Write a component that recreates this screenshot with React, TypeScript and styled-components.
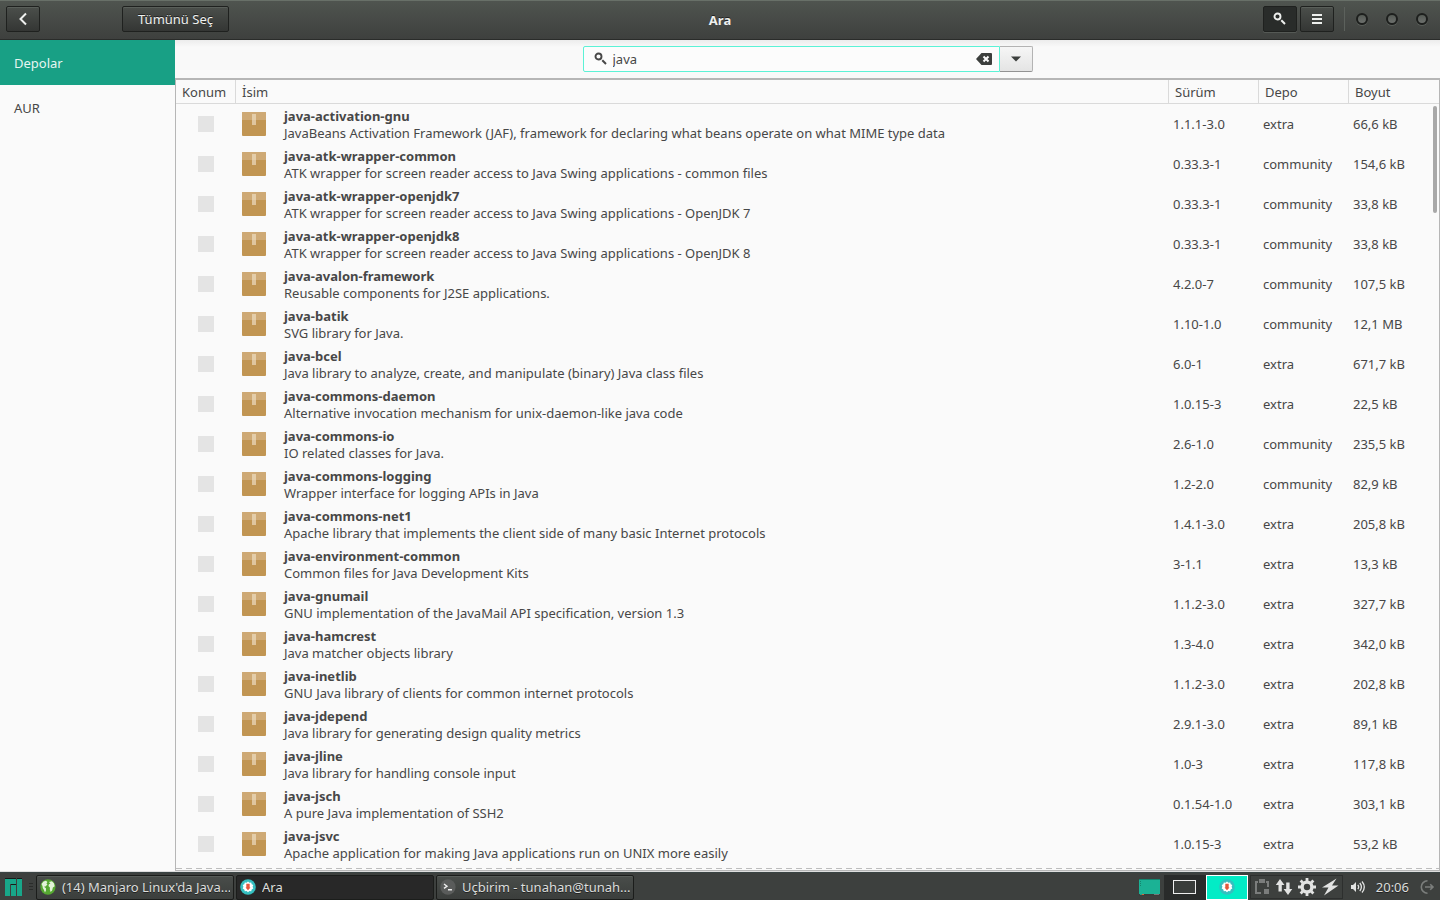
import React, { useState } from "react";
import styled, { createGlobalStyle, css } from "styled-components";

const GlobalStyle = createGlobalStyle`
  *, *::before, *::after { box-sizing: border-box; }
  body {
    margin: 0;
    background: #fafafa;
    color: #474747;
    font: 13px/17px "Noto Sans", sans-serif;
    overflow: hidden;
  }
  button, input { font: inherit; color: inherit; margin: 0; }
`;

const Desktop = styled.div`
  display: flex;
  flex-direction: column;
  height: 100vh;
`;

const HeaderBar = styled.header`
  display: grid;
  grid-template-columns: 1fr auto 1fr;
  align-items: center;
  flex: none;
  height: 40px;
  padding: 0 6px 2px;
  color: #eef0ee;
  background: linear-gradient(#4f544f, #3e403e);
  border-top: 1px solid #687068;
  border-bottom: 1px solid #2a2c2a;
`;

const HeaderSide = styled.div<{ $end?: boolean }>`
  display: flex;
  align-items: center;
  ${(p) => p.$end && css`justify-content: flex-end; padding-right: 6px;`}
`;

const Title = styled.h1`
  margin: 0;
  padding-top: 1px;
  font-size: 13px;
  line-height: 18px;
  text-shadow: 0 -1px #222;
`;

const DarkButton = styled.button<{ $pressed?: boolean; $wide?: boolean }>`
  display: flex;
  align-items: center;
  justify-content: center;
  width: ${(p) => (p.$wide ? 107 : 34)}px;
  height: 26px;
  padding: 0;
  border: 1px solid #1f211f;
  border-radius: 2px;
  text-shadow: 0 -1px #222;
  background: ${(p) => (p.$pressed ? "#292c2a" : "linear-gradient(#4b4f4b, #343634)")};
  box-shadow: ${(p) =>
    p.$pressed ? "0 1px #555955" : "inset 0 1px #5a5f5a"};
`;

const SelectAllSlot = styled.div`
  margin-left: 82px;
`;

const MenuSlot = styled.div`
  margin-left: 3px;
`;

const HeaderDivider = styled.span`
  width: 1px;
  height: 24px;
  margin: 0 11px 0 10px;
  background: #5c615c;
`;

const WindowDots = styled.div`
  display: flex;
  gap: 18px;
`;

const WindowDot = styled.button`
  width: 12px;
  height: 12px;
  padding: 0;
  border: 2px solid #1d1f1d;
  border-radius: 50%;
  background: linear-gradient(#555a55, #6d706d);
  box-shadow: 0 1px #5a5f5a;
`;

const Body = styled.div`
  display: flex;
  flex: 1;
  min-height: 0;
`;

const Sidebar = styled.nav`
  display: flex;
  flex-direction: column;
  flex: none;
  width: 175px;
`;

const SidebarItem = styled.button<{ $active?: boolean }>`
  height: 45px;
  padding: 2px 14px 0;
  border: 0;
  text-align: left;
  color: ${(p) => (p.$active ? "#e6f5f1" : "#474747")};
  background: ${(p) => (p.$active ? "#18a085" : "transparent")};
`;

const Content = styled.main`
  display: flex;
  flex-direction: column;
  flex: 1;
  min-width: 0;
`;

const SearchRow = styled.form`
  display: flex;
  justify-content: center;
  flex: none;
  height: 38px;
  padding-top: 6px;
  background: linear-gradient(#ececec, #f9f9f9 7px);
`;

const SearchBox = styled.label`
  display: flex;
  align-items: center;
  width: 417px;
  height: 26px;
  padding: 0 7px 0 10px;
  gap: 5px;
  border: 1px solid #5cf2d6;
  border-radius: 2px 0 0 2px;
  background: #fcfcfc;
`;

const SearchInput = styled.input`
  flex: 1;
  min-width: 0;
  padding: 0;
  border: 0;
  outline: 0;
  background: none;
`;

const ClearButton = styled.button`
  display: flex;
  padding: 0;
  border: 0;
  background: none;
`;

const DropButton = styled.button`
  display: flex;
  align-items: center;
  justify-content: center;
  width: 33px;
  height: 26px;
  padding: 0;
  border: 1px solid #b3b3b3;
  border-left: 0;
  border-bottom-color: #929292;
  border-radius: 0 2px 2px 0;
  background: linear-gradient(#f6f6f6, #e4e4e4);
`;

const ListFrame = styled.section`
  position: relative;
  flex: 1;
  min-height: 0;
  overflow: hidden;
  border: 1px solid #b6b6b6;
  border-top-width: 2px;
`;

const ScrollThumb = styled.div`
  position: absolute;
  top: 26px;
  right: 2px;
  width: 4px;
  height: 107px;
  border-radius: 2px;
  background: #a8a8a8;
`;

const MoreEdge = styled.div`
  position: absolute;
  left: 0;
  right: 0;
  bottom: 1px;
  height: 1px;
  background: repeating-linear-gradient(90deg, #bdbdbd 0 6px, transparent 6px 10px);
`;

const Table = styled.table`
  width: 100%;
  table-layout: fixed;
  border-collapse: separate;
  border-spacing: 0;
`;

const Col = styled.col<{ $w?: number }>`
  ${(p) => p.$w && css`width: ${p.$w}px;`}
`;

const HeadCell = styled.th`
  height: 24px;
  padding: 1px 6px 0;
  font-weight: 400;
  text-align: left;
  border-bottom: 1px solid #dadada;
  & + & { border-left: 1px solid #dadada; }
`;

const Cell = styled.td<{ $center?: boolean; $name?: boolean }>`
  height: 40px;
  padding: 0 0 0 ${(p) => (p.$center ? 0 : p.$name ? 7 : 5)}px;
  white-space: nowrap;
  text-align: ${(p) => (p.$center ? "center" : "left")};
`;

const Tick = styled.input`
  appearance: none;
  display: block;
  width: 16px;
  height: 16px;
  margin: 0 auto;
  background: #e4e4e4;
  &:checked { background: #18a085; }
`;

const Package = styled.div`
  display: flex;
  align-items: center;
  gap: 18px;
`;

const PackageText = styled.div`
  padding-top: 2px;
`;

const PackageName = styled.div`
  font-weight: 700;
`;

const Taskbar = styled.footer`
  display: flex;
  align-items: center;
  flex: none;
  height: 29px;
  padding: 2px 5px 0;
  color: #dcdedc;
  background: #3d403e;
  border-top: 1px solid #dedede;
  box-shadow: inset 0 1px #3a4444;
`;

const StartButton = styled.button`
  display: flex;
  padding: 0;
  border: 0;
  background: none;
`;

const Grip = styled.span`
  width: 4px;
  height: 8px;
  margin: 0 3px 0 7px;
  background: repeating-linear-gradient(#2a2c2a 0 1px, transparent 1px 3px);
`;

const TaskList = styled.div`
  display: flex;
  flex: 1;
  gap: 2px;
`;

const TaskButton = styled.button<{ $active?: boolean }>`
  display: flex;
  align-items: center;
  gap: 6px;
  width: 198px;
  height: 25px;
  padding: 0 3px;
  border: 1px solid #1b1d1b;
  border-radius: 2px;
  white-space: nowrap;
  text-align: left;
  text-shadow: 0 1px #222;
  background: ${(p) => (p.$active ? "#282828" : "linear-gradient(#494d4a, #3b3e3c)")};
  ${(p) => !p.$active && css`box-shadow: inset 0 1px #565b57;`}
`;

const TaskLabel = styled.span`
  overflow: hidden;
  padding-top: 1px;
`;

const Pager = styled.div`
  display: flex;
  align-items: center;
  margin-right: 2px;
`;

const Workspace = styled.button<{ $active?: boolean }>`
  display: flex;
  align-items: center;
  justify-content: center;
  width: 42px;
  height: 25px;
  padding: 0;
  border: ${(p) => (p.$active ? "1px solid #fff" : "0")};
  background: ${(p) => (p.$active ? "#02ecc6" : "#292b2a")};
`;

const WorkspaceWindow = styled.span`
  width: 23px;
  height: 14px;
  border: 1px solid #eee;
  background: #3a3d3b;
`;

const DesktopThumb = styled.button`
  display: flex;
  margin-right: 4px;
  padding: 0;
  border: 0;
  background: none;
`;

const Tray = styled.div`
  display: flex;
  align-items: center;
  gap: 5px;
  width: 93px;
  height: 24px;
  margin-right: 7px;
  padding-left: 3px;
  border: 1px solid #2d2f2e;
`;

const Clock = styled.time`
  margin: 0 10px;
  padding-top: 1px;
  text-shadow: 0 1px #222;
`;

const SearchGlyph = () => (
  <svg width="14" height="14" viewBox="0 0 14 14" fill="none" stroke="currentColor" aria-hidden="true">
    <circle cx="4.500" cy="4.500" r="3" strokeWidth="1.9" />
    <path d="M8.300 8.300 12 12" strokeWidth="2" />
  </svg>
);

const PackageIcon = () => (
  <svg width="24" height="24" viewBox="0 0 24 24" aria-hidden="true">
    <rect width="24" height="24" rx="1" fill="#c19552" />
    <path d="M1 0h22l1 1v7H0V1z" fill="#cea975" />
    <path d="M10 2h4v11h-4z" fill="#dfc59e" />
    <path d="M10 2h4v6h-4z" fill="#e4cda9" />
  </svg>
);

const ManjaroLogo = () => (
  <svg width="17" height="18" viewBox="0 0 17 18" aria-hidden="true">
    <path d="M0 0h11v1H0zM12 0h5v1h-5zM6 6h5v1H6z" fill="#171b19" />
    <path d="M0 1h11v5H5v12H0zM6 7h5v11H6zM12 1h5v17h-5z" fill="#18a689" />
  </svg>
);

const GlobeIcon = () => (
  <svg width="16" height="16" viewBox="0 0 16 16" aria-hidden="true">
    <circle cx="8" cy="8" r="7.7" fill="#56a832" />
    <path d="M1.500 5 3.500 2.400 6 1.800 7.500 3 6.500 4.500 7.500 5.500 5.500 7.500 4 7.800 6 9.300 6 11.500 5 13.500 4 11 2.800 9 2.500 7zM9 3l3-.8 2 2 .8 3L13 8.500l-.8 3-1.500 1.500-.8-2.500L10 8.500 8.500 7 9 5.200l1.500-.8z" fill="#e3f3d9" />
  </svg>
);

const PamacIcon = ({ size = 16 }: { size?: number }) => (
  <svg width={size} height={size} viewBox="0 0 16 16" aria-hidden="true">
    <circle cx="8" cy="8" r="7.8" fill="#35bfc0" />
    <path d="m8 2.600 1.400 1.100 1.800-.3.500 1.800 1.600.9-.7 1.700.7 1.700-1.600.9-.5 1.800-1.800-.2L8 13.300 6.600 12l-1.800.2-.5-1.800-1.600-.9.700-1.700-.7-1.700 1.600-.9.500-1.800 1.800.3z" fill="#fff" />
    <path d="M6.300 4.800h3.400v3.700h.8L8 11.300 5.500 8.500h.8z" fill="#e4573d" />
  </svg>
);

const TerminalIcon = () => (
  <svg width="16" height="16" viewBox="0 0 16 16" fill="none" aria-hidden="true">
    <circle cx="8" cy="8" r="7.7" fill="#5a5c5b" />
    <path d="m4 5 3 2.200L4 9.400M8 10.800h4" stroke="#eee" strokeWidth="1.4" />
  </svg>
);

const DesktopPreview = () => (
  <svg width="21" height="17" viewBox="0 0 21 17" aria-hidden="true">
    <path d="M0 0h21v17H0z" fill="#1bb295" />
    <path d="M0 0h21v1H0zM1 2h1v1H1zM1 4h1v1H1zM1 6h1v1H1z" fill="#14846e" />
    <path d="M0 15h21v2H0z" fill="#3a3d3b" />
    <path d="M1 15h2v1H1z" fill="#2f9a84" />
    <path d="M3 15h2v1H3z" fill="#d9653c" />
    <path d="M15 15h5v1h-5z" fill="#777" />
  </svg>
);

const ClipboardIcon = () => (
  <svg width="16" height="16" viewBox="0 0 16 16" aria-hidden="true">
    <path d="M1 2h3v2H3v9h4v2H1zM5 0h6v4H5zM12 2h3v6h-2V4h-1zM10 10h5v5h-5z" fill="#7b7d7c" />
  </svg>
);

const UpDownIcon = () => (
  <svg width="18" height="18" viewBox="0 0 18 18" fill="#e2e3e2" aria-hidden="true">
    <path d="M5 1 9.500 7H6.800v6.500H3.500V7H.8zM13 17 8.600 11h2.600V4.500h3.400V11h2.700z" />
  </svg>
);

const GearIcon = () => (
  <svg width="18" height="18" viewBox="0 0 18 18" fill="none" stroke="#e2e3e2" aria-hidden="true">
    <circle cx="9" cy="9" r="4.900" strokeWidth="3.4" />
    <path d="M9 0v3M9 15v3M0 9h3M15 9h3M2.600 2.600l2.200 2.200M13.200 13.200l2.200 2.200M2.600 15.400l2.200-2.200M13.200 4.800l2.200-2.200" strokeWidth="2.8" />
  </svg>
);

const BoltIcon = () => (
  <svg width="18" height="18" viewBox="0 0 18 18" fill="#e2e3e2" aria-hidden="true">
    <path d="M15.500.5 1 9.500h6.500L3 17.500 17.500 7.500H11z" />
  </svg>
);

const SpeakerIcon = () => (
  <svg width="16" height="14" viewBox="0 0 16 14" fill="none" stroke="#e2e3e2" aria-hidden="true">
    <path d="M1 5h2l3-3v10L3 9H1z" fill="#e2e3e2" stroke="none" />
    <path d="M7.800 4.800q1.700 2.200 0 4.400M9.800 3q3.200 4 0 8M12 1.500q4.600 5.500 0 11" strokeWidth="1.3" />
  </svg>
);

const LogoutIcon = () => (
  <svg width="16" height="16" viewBox="0 0 16 16" fill="none" stroke="#7b7e7c" strokeWidth="1.6" aria-hidden="true">
    <path d="M8.500 1.800a6.200 6.200 0 1 0 0 12.400M6 8h8M11.200 5.200 14 8l-2.800 2.800" />
  </svg>
);

type Row = [name: string, description: string, version: string, repo: string, size: string];

const rows: Row[] = [
  ["java-activation-gnu", "JavaBeans Activation Framework (JAF), framework for declaring what beans operate on what MIME type data", "1.1.1-3.0", "extra", "66,6 kB"],
  ["java-atk-wrapper-common", "ATK wrapper for screen reader access to Java Swing applications - common files", "0.33.3-1", "community", "154,6 kB"],
  ["java-atk-wrapper-openjdk7", "ATK wrapper for screen reader access to Java Swing applications - OpenJDK 7", "0.33.3-1", "community", "33,8 kB"],
  ["java-atk-wrapper-openjdk8", "ATK wrapper for screen reader access to Java Swing applications - OpenJDK 8", "0.33.3-1", "community", "33,8 kB"],
  ["java-avalon-framework", "Reusable components for J2SE applications.", "4.2.0-7", "community", "107,5 kB"],
  ["java-batik", "SVG library for Java.", "1.10-1.0", "community", "12,1 MB"],
  ["java-bcel", "Java library to analyze, create, and manipulate (binary) Java class files", "6.0-1", "extra", "671,7 kB"],
  ["java-commons-daemon", "Alternative invocation mechanism for unix-daemon-like java code", "1.0.15-3", "extra", "22,5 kB"],
  ["java-commons-io", "IO related classes for Java.", "2.6-1.0", "community", "235,5 kB"],
  ["java-commons-logging", "Wrapper interface for logging APIs in Java", "1.2-2.0", "community", "82,9 kB"],
  ["java-commons-net1", "Apache library that implements the client side of many basic Internet protocols", "1.4.1-3.0", "extra", "205,8 kB"],
  ["java-environment-common", "Common files for Java Development Kits", "3-1.1", "extra", "13,3 kB"],
  ["java-gnumail", "GNU implementation of the JavaMail API specification, version 1.3", "1.1.2-3.0", "extra", "327,7 kB"],
  ["java-hamcrest", "Java matcher objects library", "1.3-4.0", "extra", "342,0 kB"],
  ["java-inetlib", "GNU Java library of clients for common internet protocols", "1.1.2-3.0", "extra", "202,8 kB"],
  ["java-jdepend", "Java library for generating design quality metrics", "2.9.1-3.0", "extra", "89,1 kB"],
  ["java-jline", "Java library for handling console input", "1.0-3", "extra", "117,8 kB"],
  ["java-jsch", "A pure Java implementation of SSH2", "0.1.54-1.0", "extra", "303,1 kB"],
  ["java-jsvc", "Apache application for making Java applications run on UNIX more easily", "1.0.15-3", "extra", "53,2 kB"],
];

export default function App() {
  const [query, setQuery] = useState("java");
  return (
    <Desktop>
      <GlobalStyle />
      <HeaderBar>
        <HeaderSide>
          <DarkButton aria-label="Geri">
            <svg width="10" height="14" viewBox="0 0 10 14" fill="none" stroke="currentColor" strokeWidth="2" aria-hidden="true">
              <path d="M8 1.500 2.500 7 8 12.500" />
            </svg>
          </DarkButton>
          <SelectAllSlot>
            <DarkButton $wide>Tümünü Seç</DarkButton>
          </SelectAllSlot>
        </HeaderSide>
        <Title>Ara</Title>
        <HeaderSide $end>
          <DarkButton $pressed aria-label="Ara"><SearchGlyph /></DarkButton>
          <MenuSlot>
            <DarkButton aria-label="Menü">
              <svg width="10" height="10" viewBox="0 0 10 10" fill="currentColor" aria-hidden="true">
                <path d="M0 0h10v2H0zM0 4h10v2H0zM0 8h10v2H0z" />
              </svg>
            </DarkButton>
          </MenuSlot>
          <HeaderDivider />
          <WindowDots>
            <WindowDot aria-label="Küçült" />
            <WindowDot aria-label="Büyüt" />
            <WindowDot aria-label="Kapat" />
          </WindowDots>
        </HeaderSide>
      </HeaderBar>
      <Body>
        <Sidebar>
          <SidebarItem $active>Depolar</SidebarItem>
          <SidebarItem>AUR</SidebarItem>
        </Sidebar>
        <Content>
          <SearchRow onSubmit={(e) => e.preventDefault()}>
            <SearchBox>
              <SearchGlyph />
              <SearchInput aria-label="Ara" value={query} onChange={(e) => setQuery(e.target.value)} />
              <ClearButton type="button" aria-label="Temizle" onClick={() => setQuery("")}>
                <svg width="16" height="12" viewBox="0 0 16 12" aria-hidden="true">
                  <path d="M5.500 0H15a1 1 0 0 1 1 1v10a1 1 0 0 1-1 1H5.500L0 6z" fill="#3c3f3d" />
                  <path d="m7.500 3.500 5 5M12.500 3.500l-5 5" stroke="#fcfcfc" strokeWidth="2" />
                </svg>
              </ClearButton>
            </SearchBox>
            <DropButton type="button" aria-label="Arama geçmişi">
              <svg width="10" height="6" viewBox="0 0 10 6" aria-hidden="true">
                <path d="M0 .5h10L5 5.500z" fill="#3c3f3d" />
              </svg>
            </DropButton>
          </SearchRow>
          <ListFrame>
            <Table>
              <colgroup>
                <Col $w={59} />
                <Col />
                <Col $w={90} />
                <Col $w={90} />
                <Col $w={91} />
              </colgroup>
              <thead>
                <tr>
                  <HeadCell>Konum</HeadCell>
                  <HeadCell>İsim</HeadCell>
                  <HeadCell>Sürüm</HeadCell>
                  <HeadCell>Depo</HeadCell>
                  <HeadCell>Boyut</HeadCell>
                </tr>
              </thead>
              <tbody>
                {rows.map(([name, description, version, repo, size]) => (
                  <tr key={name}>
                    <Cell $center><Tick type="checkbox" aria-label={name} /></Cell>
                    <Cell $name>
                      <Package>
                        <PackageIcon />
                        <PackageText>
                          <PackageName>{name}</PackageName>
                          <div>{description}</div>
                        </PackageText>
                      </Package>
                    </Cell>
                    <Cell>{version}</Cell>
                    <Cell>{repo}</Cell>
                    <Cell>{size}</Cell>
                  </tr>
                ))}
              </tbody>
            </Table>
            <ScrollThumb />
            <MoreEdge />
          </ListFrame>
        </Content>
      </Body>
      <Taskbar>
        <StartButton aria-label="Manjaro"><ManjaroLogo /></StartButton>
        <Grip />
        <TaskList>
          <TaskButton><GlobeIcon /><TaskLabel>(14) Manjaro Linux'da Java...</TaskLabel></TaskButton>
          <TaskButton $active><PamacIcon /><TaskLabel>Ara</TaskLabel></TaskButton>
          <TaskButton><TerminalIcon /><TaskLabel>Uçbirim - tunahan@tunah...</TaskLabel></TaskButton>
        </TaskList>
        <DesktopThumb aria-label="Masaüstü"><DesktopPreview /></DesktopThumb>
        <Pager>
          <Workspace aria-label="Çalışma alanı 1"><WorkspaceWindow /></Workspace>
          <Workspace $active aria-label="Çalışma alanı 2"><PamacIcon /></Workspace>
        </Pager>
        <Tray>
          <ClipboardIcon />
          <UpDownIcon />
          <GearIcon />
          <BoltIcon />
        </Tray>
        <SpeakerIcon />
        <Clock>20:06</Clock>
        <LogoutIcon />
      </Taskbar>
    </Desktop>
  );
}
